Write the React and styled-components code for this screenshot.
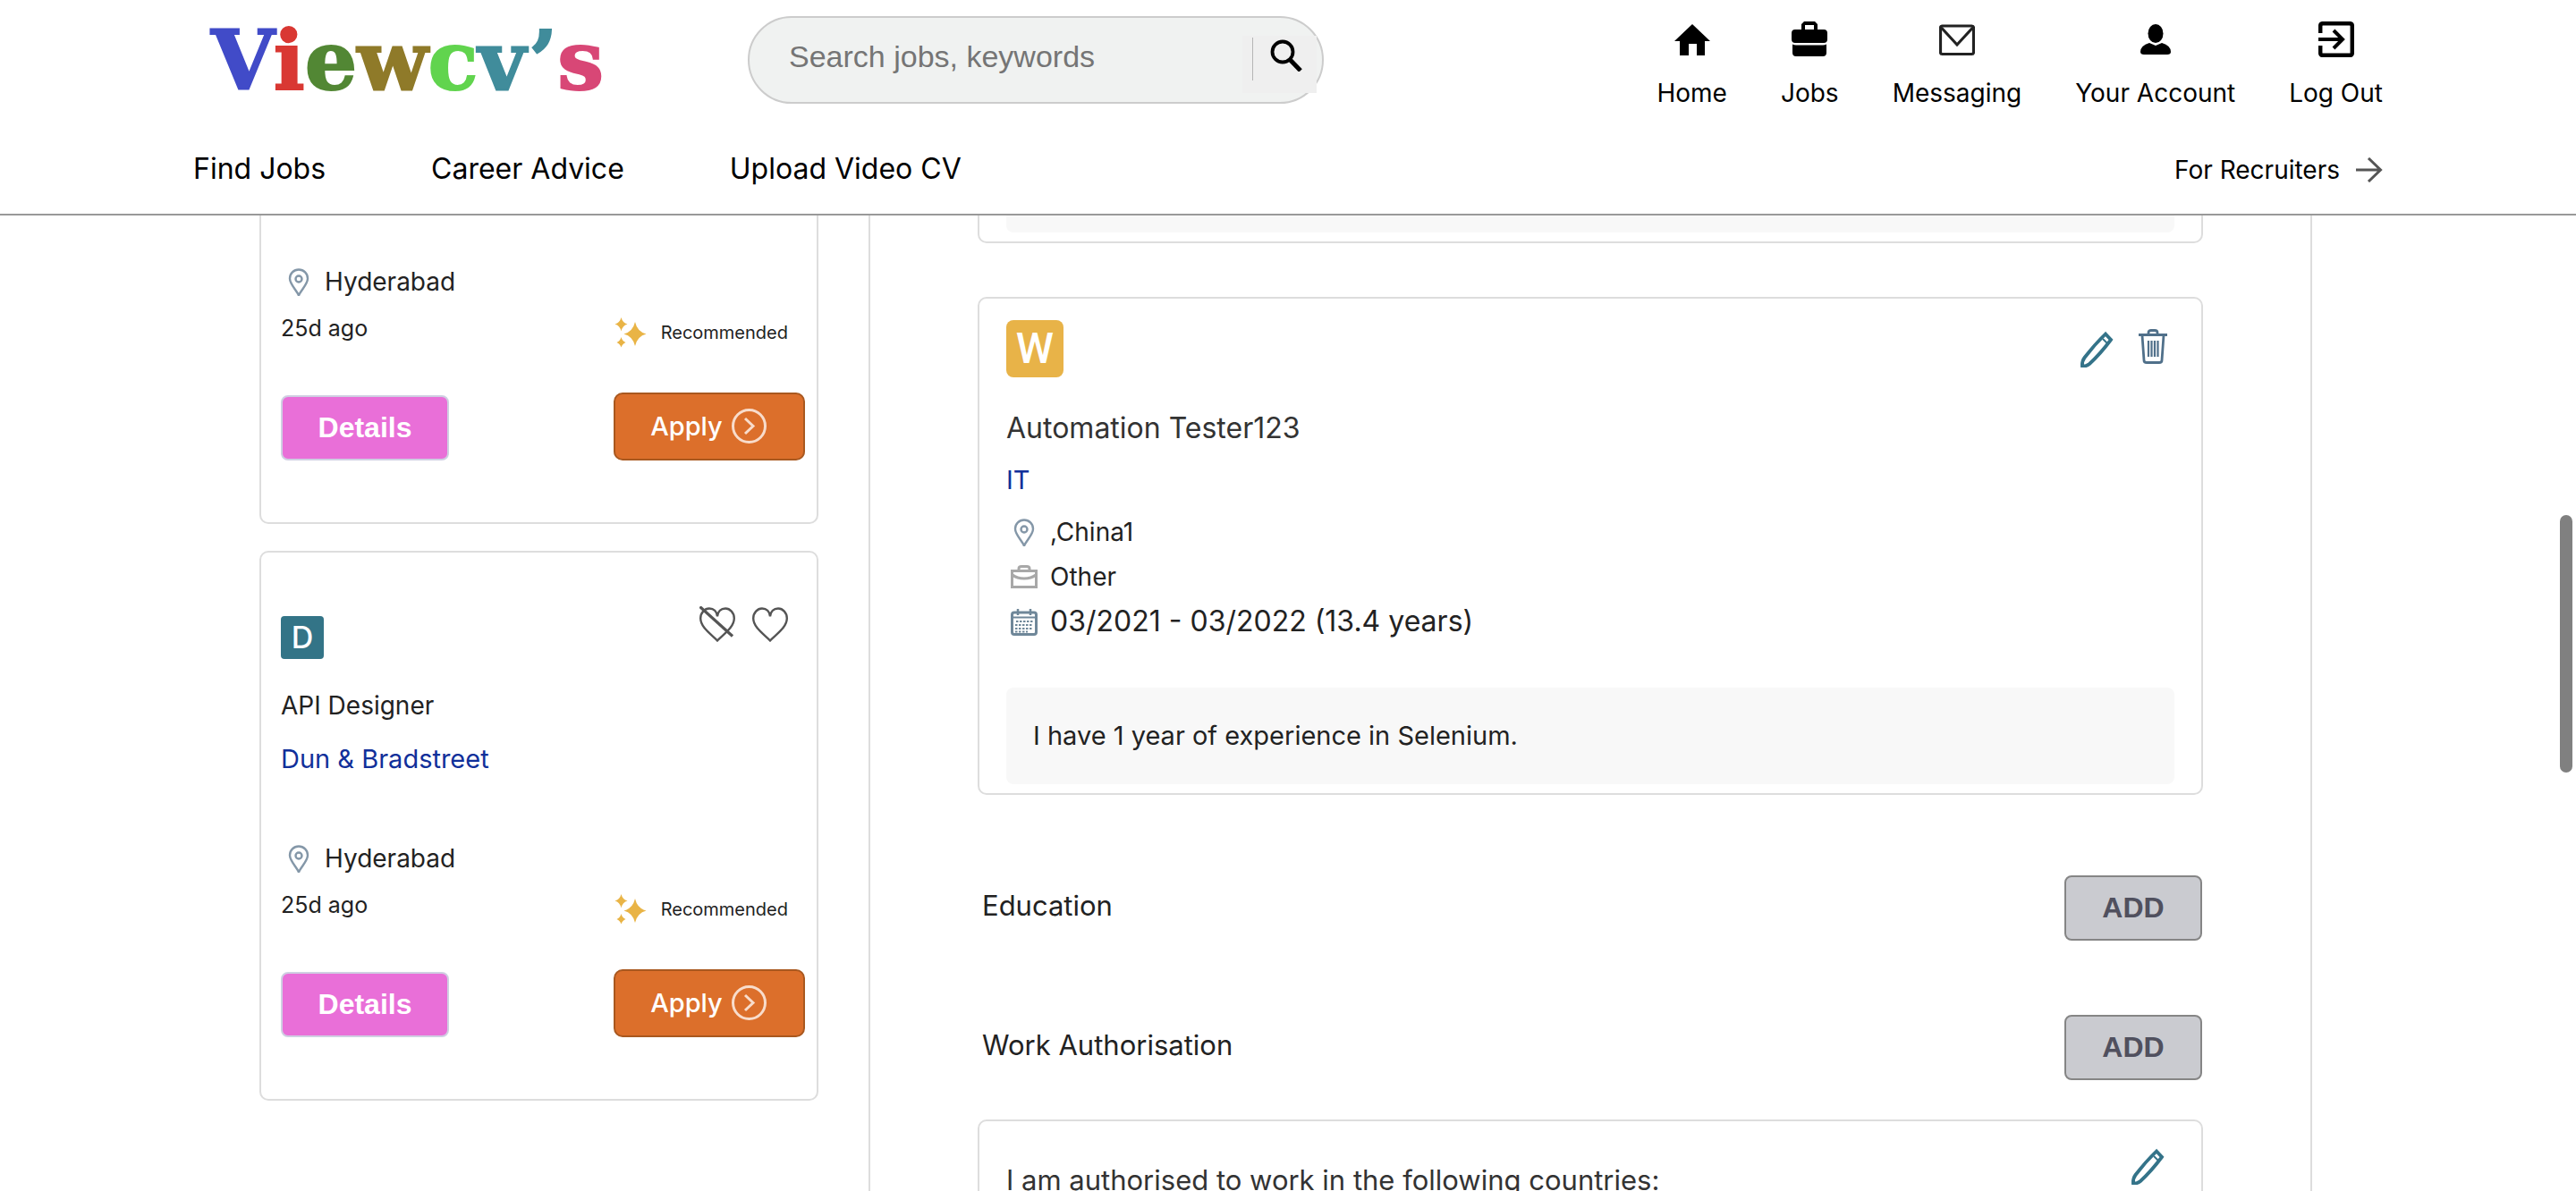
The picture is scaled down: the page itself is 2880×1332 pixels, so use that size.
import React from "react";
import styled, { createGlobalStyle } from "styled-components";

const INK = "#222222";
const LINE = "#dddddd";
const BODY = 'Inter, Roboto, "Noto Sans", sans-serif';
const CONTROL = '"Liberation Sans", Arial, sans-serif';

const GlobalStyle = createGlobalStyle`
  *, *::before, *::after { box-sizing: border-box; }
  body { margin: 0; background: #ffffff; color: ${INK}; font-family: ${BODY}; }
  h2, h3, p { margin: 0; padding: 0; font-weight: 400; }
  a { color: inherit; text-decoration: none; }
  svg { display: block; flex: none; }
`;

/* ---------- page frame ---------- */

const Page = styled.div`
  display: flex;
  flex-direction: column;
  height: 100vh;
  overflow: hidden;
`;

const Header = styled.header`
  flex: none;
  padding: 0 216px 29px;
  border-bottom: 2px solid #999999;
  background: #ffffff;
  color: #000000;
`;

const TopRow = styled.div`
  display: flex;
  align-items: flex-start;
  padding-top: 18px;
`;

const Logo = styled.a`
  flex: none;
  width: 620px;
  padding-left: 20px;
  font: 700 92px/100px "DejaVu Serif", serif;
`;

const Letter = styled.span`
  color: ${(p) => p.$color};
  -webkit-text-stroke: 2px ${(p) => p.$color};
`;

const Search = styled.form`
  display: flex;
  align-items: flex-start;
  width: 644px;
  height: 98px;
  padding: 0 6px 0 44px;
  border: 2px solid #cccccc;
  border-radius: 49px;
  background: #f0f2f1;
`;

const SearchInput = styled.input`
  flex: 1;
  min-width: 0;
  height: 86px;
  padding: 0;
  border: 0;
  outline: 0;
  background: transparent;
  color: ${INK};
  font: 34px ${CONTROL};
  &::placeholder { color: #757575; opacity: 1; }
`;

const SearchButton = styled.button`
  display: flex;
  align-items: flex-start;
  flex: none;
  width: 83px;
  height: 64px;
  margin-top: 20px;
  padding: 2px 0 0 11px;
  border: 0;
  background: #efefef;
`;

const Divider = styled.span`
  width: 1px;
  height: 48px;
  margin-right: 19px;
  background: #b5b5b5;
`;

const IconNav = styled.nav`
  display: flex;
  gap: 60px;
  margin-left: auto;
  padding-top: 6px;
`;

const IconLink = styled.a`
  display: flex;
  flex-direction: column;
  align-items: center;
  gap: 22px;
  font-size: 28px;
  line-height: 36px;
`;

const BottomRow = styled.nav`
  display: flex;
  align-items: baseline;
  gap: 118px;
  margin-top: 47px;
`;

const NavLink = styled.a`
  font-size: 32px;
  line-height: 40px;
`;

const RecruiterLink = styled.a`
  display: flex;
  align-items: center;
  gap: 18px;
  margin-left: auto;
  font-size: 28px;
  line-height: 40px;
`;

const Content = styled.div`
  flex: 1;
  display: flex;
  gap: 56px;
  min-height: 0;
  overflow: hidden;
  padding: 0 295px 0 290px;
`;

const Scrollbar = styled.div`
  position: fixed;
  top: 576px;
  right: 4px;
  width: 14px;
  height: 288px;
  border-radius: 7px;
  background: #808080;
`;

/* ---------- shared parts ---------- */

const Card = styled.article`
  flex: none;
  border: 2px solid ${LINE};
  border-top-width: ${(p) => (p.$continued ? 0 : 2)}px;
  border-radius: ${(p) => (p.$continued ? "0 0 10px 10px" : "10px")};
`;

const Fact = styled.p`
  display: flex;
  align-items: center;
  gap: 9px;
  font-size: ${(p) => (p.$large ? 32 : 28)}px;
  line-height: 40px;
`;

const IconSlot = styled.span`
  display: flex;
  justify-content: center;
  width: 40px;
`;

const IconButton = styled.button`
  display: flex;
  align-items: center;
  justify-content: center;
  width: ${(p) => p.$size}px;
  height: ${(p) => p.$size}px;
  padding: 0;
  border: 0;
  background: transparent;
`;

const Company = styled.a`
  display: block;
  color: #11309a;
  font-size: 29px;
  line-height: 40px;
`;

/* ---------- job list ---------- */

const Sidebar = styled.aside`
  display: flex;
  flex-direction: column;
  flex: none;
  gap: 30px;
  width: 625px;
`;

const JobCard = styled(Card)`
  padding: ${(p) => (p.$continued ? 54 : 60)}px 13px 69px 22px;
`;

const JobHead = styled.div`
  display: flex;
  justify-content: space-between;
  align-items: flex-start;
  padding-right: 19px;
`;

const CompanyBadge = styled.span`
  display: flex;
  align-items: center;
  justify-content: center;
  width: 48px;
  height: 48px;
  margin-top: 11px;
  border-radius: 4px;
  background: #337487;
  color: #ffffff;
  font: 500 34px/48px ${BODY};
`;

const Hearts = styled.div`
  display: flex;
  gap: 19px;
`;

const JobTitle = styled.h3`
  margin: 32px 0 20px;
  font-size: 28px;
  line-height: 40px;
`;

const JobPlace = styled.div`
  margin-top: ${(p) => (p.$first ? 0 : 71)}px;
`;

const JobMeta = styled.div`
  display: flex;
  justify-content: space-between;
  align-items: flex-end;
  height: 42px;
  margin-top: 12px;
  padding-right: 19px;
`;

const Age = styled.span`
  align-self: flex-start;
  font-size: 25px;
  line-height: 40px;
`;

const Recommended = styled.span`
  display: flex;
  align-items: center;
  gap: 16px;
  font-size: 20px;
  line-height: 34px;
`;

const JobActions = styled.div`
  display: flex;
  justify-content: space-between;
  align-items: flex-end;
  margin-top: 50px;
`;

const DetailsButton = styled.button`
  width: 188px;
  height: 73px;
  border: 2px solid #cfcfe2;
  border-radius: 8px;
  background: #e96fd8;
  color: #ffffff;
  font: 700 32px ${CONTROL};
`;

const ApplyButton = styled.button`
  display: flex;
  align-items: center;
  justify-content: center;
  gap: 10px;
  width: 214px;
  height: 76px;
  padding: 0 2px 2px 0;
  border: 2px solid #a9581f;
  border-radius: 10px;
  background: #dc6f2b;
  color: #ffffff;
  font: 500 29px ${BODY};
`;

/* ---------- profile ---------- */

const Profile = styled.main`
  flex: 1;
  min-width: 0;
  display: flex;
  flex-direction: column;
  padding: 0 120px;
  border: solid ${LINE};
  border-width: 0 2px;
`;

const EntryCard = styled(Card)`
  margin-top: ${(p) => (p.$continued ? 0 : 60)}px;
  padding: ${(p) => (p.$continued ? 0 : 24)}px 30px 10px;
`;

const EntryHead = styled.div`
  display: flex;
  align-items: center;
  justify-content: space-between;
`;

const EntryBadge = styled.span`
  width: 64px;
  height: 64px;
  border-radius: 8px;
  background: #e8b348;
  color: #ffffff;
  font: 500 48px/64px Roboto, ${BODY};
  text-align: center;
`;

const EntryTools = styled.div`
  display: flex;
  gap: 15px;
`;

const EntryTitle = styled.h3`
  margin: 37px 0 18px;
  color: #333333;
  font-size: 32px;
  line-height: 40px;
`;

const Facts = styled.div`
  display: grid;
  gap: 10px;
  margin: 18px 0 54px;
`;

const Summary = styled.p`
  padding: 34px 30px;
  border-radius: 8px;
  background: #f8f8f8;
  font-size: 29px;
  line-height: 40px;
`;

const SummaryEnd = styled.div`
  height: 19px;
  border-radius: 0 0 8px 8px;
  background: #f8f8f8;
`;

const Section = styled.section`
  flex: none;
  display: flex;
  align-items: center;
  justify-content: space-between;
  margin-top: ${(p) => p.$top}px;
  padding: 0 1px 0 5px;
`;

const SectionTitle = styled.h2`
  padding-bottom: 6px;
  font-size: 31px;
  line-height: 40px;
`;

const AddButton = styled.button`
  width: 154px;
  height: 73px;
  border: 2px solid #858585;
  border-radius: 8px;
  background: #cacbd0;
  color: #50505e;
  font: 700 32px ${CONTROL};
`;

const RightsCard = styled(Card)`
  display: flex;
  align-items: flex-start;
  justify-content: space-between;
  margin-top: 44px;
  padding: 26px 36px 30px 30px;
`;

const RightsText = styled.p`
  padding-top: 20px;
  color: #333333;
  font-size: 31px;
  line-height: 40px;
`;

/* ---------- drawings ---------- */

const HomeIcon = () => (
  <svg width="40" height="40" viewBox="0 0 40 40">
    <path d="M20 3 0 22h6v16h10V25h9v13h9V22h6z" />
  </svg>
);

const JobsIcon = () => (
  <svg width="40" height="40" viewBox="0 0 40 40">
    <path d="M11 9V3l3-3h12l3 3v6h7q4 0 4 4v7q0 4-4 4H4q-4 0-4-4v-7q0-4 4-4zm4 0h10V4H15z" fillRule="evenodd" />
    <path d="M1 25.500q2 1 4 1h30q2 0 4-1V35q0 4-4 4H5q-4 0-4-4z" />
  </svg>
);

const MailIcon = () => (
  <svg width="40" height="40" viewBox="0 0 40 40" fill="none" stroke="#222222" strokeWidth="3.200">
    <rect x="1.500" y="5" width="37" height="31.500" rx="2" />
    <path d="M2.500 7l17.500 19L37.500 7" />
  </svg>
);

const AccountIcon = () => (
  <svg width="40" height="40" viewBox="0 0 40 40">
    <ellipse cx="20" cy="13.500" rx="8.500" ry="10.500" />
    <path d="M3 34q0-7 10-10l7 3 7-3q10 3 10 10 0 3-4 3H7q-4 0-4-3z" />
  </svg>
);

const LogOutIcon = () => (
  <svg width="40" height="40" viewBox="0 0 40 40" fill="none" stroke="#000000" strokeWidth="4.500">
    <path d="M2.200 13V5q0-2.800 2.800-2.800h30q2.800 0 2.800 2.800v30q0 2.800-2.800 2.800H5q-2.800 0-2.800-2.800v-8" />
    <path d="M0 20h27M17 10l10 10-10 10" strokeWidth="4" />
  </svg>
);

const SearchIcon = () => (
  <svg width="38" height="38" viewBox="0 0 38 38" fill="none" stroke="#000000">
    <circle cx="14" cy="16" r="11.500" strokeWidth="3.800" />
    <path d="M22 24.500 34 37" strokeWidth="5" />
  </svg>
);

const ArrowIcon = () => (
  <svg width="30" height="28" viewBox="0 0 30 28" fill="none" stroke="#555555" strokeWidth="3">
    <path d="M0 14h27M14 1l13.500 13L14 27" />
  </svg>
);

const PinIcon = () => (
  <svg width="24" height="32" viewBox="0 0 24 32" fill="none" stroke="#8497a8" strokeWidth="2.400">
    <path d="M12 31.500C10 26 2 19 2 12.500a10 10 0 0 1 20 0C22 19 14 26 12 31.500z" />
    <circle cx="12" cy="13" r="3.500" />
  </svg>
);

const CaseIcon = () => (
  <svg width="30" height="26" viewBox="0 0 30 26" fill="none" stroke="#a8a8a8" strokeWidth="3">
    <rect x="1.500" y="6.500" width="27" height="18" />
    <path d="M9 6V4q0-2.500 3-2.500h6q3 0 3 2.500v2M2 11q5 4 13 4t13-4" />
  </svg>
);

const CalendarIcon = () => (
  <svg width="30" height="32" viewBox="0 -2 30 32" fill="none" stroke="#6f8799">
    <rect x="1.500" y="4" width="27" height="24.500" rx="2.500" strokeWidth="3" />
    <path d="M2 9.500h26" strokeWidth="2" />
    <path d="M8 0v7M22 0v7" strokeWidth="2.500" />
    <path d="M6 14h19M5 18h20M5 22h20M5 25.500h14" strokeWidth="2" strokeDasharray="2.500 1.500" />
  </svg>
);

const SparkleIcon = () => (
  <svg width="36" height="34" viewBox="0 0 36 34" fill="#e9b446">
    <path d="M23 5q2.500 11 12.500 13.500Q25.500 21 23 32q-2.500-11-12.500-13.500Q20.500 16 23 5zM7.500 0q1.500 6 7 7.500-5.500 1.500-7 8-1.500-6.500-7-8 5.500-1.500 7-7.500zM7.500 22q1.200 4.500 5 6-3.800 1.500-5 5.500-1.200-4-5-5.500 3.800-1.500 5-6z" />
  </svg>
);

const HeartIcon = ({ crossed }) => (
  <svg width="40" height="40" viewBox="0 0 40 40" fill="none" stroke="#555555" strokeWidth="2.400">
    <path d="M20 38.500C14 32 1.200 24 1.200 13.500 1.200 7 6 2.500 11 2.500c5 0 8.500 3.500 9 9 .5-5.500 4-9 9-9s9.800 4.500 9.800 11C38.800 24 26 32 20 38.500z" />
    {crossed && <path d="M.5.500 37 33.500" strokeWidth="3.200" />}
  </svg>
);

const ChevronCircleIcon = () => (
  <svg width="39" height="39" viewBox="0 0 39 39" fill="none" stroke="#f8dccb">
    <circle cx="19.500" cy="19.500" r="18" strokeWidth="3" />
    <path d="M15 11l9 8.500-9 8.500" strokeWidth="3" />
  </svg>
);

const PencilIcon = () => (
  <svg width="40" height="42" viewBox="0 0 40 42" fill="none" stroke="#347389" strokeWidth="3.800">
    <path d="M30 4.500 36 11Q24 27 12 38q-3 2.500-8 3Q3.500 35 6.500 31 18 16 30 4.500z" />
    <path d="M27 10l5 5" strokeWidth="2" />
  </svg>
);

const TrashIcon = () => (
  <svg width="32" height="44" viewBox="-1 0 32 44" fill="none" stroke="#50708a" strokeWidth="2.800">
    <path d="M-1 6.500h32M10 6V4q0-2.500 3-2.500h4q3 0 3 2.500v2" />
    <path d="M3 7l2 28q0 2.500 3 2.500h14q3 0 3-2.500L27 7" />
    <path d="M10 13v18M13.500 13v18M17 13v18M20.500 13v18" strokeWidth="2.200" />
  </svg>
);

/* ---------- data ---------- */

const LOGO = [
  ["V", "#414bc8"],
  ["i", "#d93833"],
  ["e", "#528734"],
  ["w", "#8f7a29"],
  ["c", "#61d44e"],
  ["v", "#408c9b"],
  ["’", "#408c9b"],
  ["s", "#d84776"],
];

const ICON_LINKS = [
  ["Home", HomeIcon],
  ["Jobs", JobsIcon],
  ["Messaging", MailIcon],
  ["Your Account", AccountIcon],
  ["Log Out", LogOutIcon],
];

const NAV_LINKS = ["Find Jobs", "Career Advice", "Upload Video CV"];

const FACTS = [
  { icon: PinIcon, text: ",China1" },
  { icon: CaseIcon, text: "Other" },
  { icon: CalendarIcon, text: "03/2021 - 03/2022 (13.4 years)", large: true },
];

/* ---------- composition ---------- */

function JobItem({ title, company, initial, place, age, continued }) {
  return (
    <JobCard $continued={continued}>
      {!continued && (
        <>
          <JobHead>
            <CompanyBadge>{initial}</CompanyBadge>
            <Hearts>
              <IconButton $size={40} type="button" aria-label="Hide job"><HeartIcon crossed /></IconButton>
              <IconButton $size={40} type="button" aria-label="Save job"><HeartIcon /></IconButton>
            </Hearts>
          </JobHead>
          <JobTitle>{title}</JobTitle>
          <Company href="#company">{company}</Company>
        </>
      )}
      <JobPlace $first={continued}>
        <Fact>
          <IconSlot><PinIcon /></IconSlot>
          {place}
        </Fact>
      </JobPlace>
      <JobMeta>
        <Age>{age}</Age>
        <Recommended><SparkleIcon />Recommended</Recommended>
      </JobMeta>
      <JobActions>
        <DetailsButton type="button">Details</DetailsButton>
        <ApplyButton type="button">Apply<ChevronCircleIcon /></ApplyButton>
      </JobActions>
    </JobCard>
  );
}

function SectionBar({ title, top }) {
  return (
    <Section $top={top}>
      <SectionTitle>{title}</SectionTitle>
      <AddButton type="button">ADD</AddButton>
    </Section>
  );
}

export default function App() {
  return (
    <Page>
      <GlobalStyle />
      <Header>
        <TopRow>
          <Logo href="#home">
            {LOGO.map(([char, color]) => (
              <Letter key={char + color} $color={color}>{char}</Letter>
            ))}
          </Logo>
          <Search role="search">
            <SearchInput type="search" aria-label="Search jobs" placeholder="Search jobs, keywords" />
            <SearchButton type="button" aria-label="Search">
              <Divider />
              <SearchIcon />
            </SearchButton>
          </Search>
          <IconNav>
            {ICON_LINKS.map(([label, Icon]) => (
              <IconLink key={label} href="#menu">
                <Icon />
                {label}
              </IconLink>
            ))}
          </IconNav>
        </TopRow>
        <BottomRow>
          {NAV_LINKS.map((label) => (
            <NavLink key={label} href="#nav">{label}</NavLink>
          ))}
          <RecruiterLink href="#recruiters">For Recruiters<ArrowIcon /></RecruiterLink>
        </BottomRow>
      </Header>

      <Content>
        <Sidebar>
          <JobItem continued place="Hyderabad" age="25d ago" />
          <JobItem title="API Designer" company="Dun & Bradstreet" initial="D" place="Hyderabad" age="25d ago" />
        </Sidebar>

        <Profile>
          <EntryCard $continued>
            <SummaryEnd />
          </EntryCard>

          <EntryCard>
            <EntryHead>
              <EntryBadge>W</EntryBadge>
              <EntryTools>
                <IconButton $size={48} type="button" aria-label="Edit"><PencilIcon /></IconButton>
                <IconButton $size={48} type="button" aria-label="Delete"><TrashIcon /></IconButton>
              </EntryTools>
            </EntryHead>
            <EntryTitle>Automation Tester123</EntryTitle>
            <Company href="#it">IT</Company>
            <Facts>
              {FACTS.map(({ icon: Icon, text, large }) => (
                <Fact key={text} $large={large}>
                  <IconSlot><Icon /></IconSlot>
                  {text}
                </Fact>
              ))}
            </Facts>
            <Summary>I have 1 year of experience in Selenium.</Summary>
          </EntryCard>

          <SectionBar title="Education" top={90} />
          <SectionBar title="Work Authorisation" top={83} />

          <RightsCard>
            <RightsText>I am authorised to work in the following countries:</RightsText>
            <IconButton $size={48} type="button" aria-label="Edit"><PencilIcon /></IconButton>
          </RightsCard>
        </Profile>
      </Content>
      <Scrollbar />
    </Page>
  );
}
